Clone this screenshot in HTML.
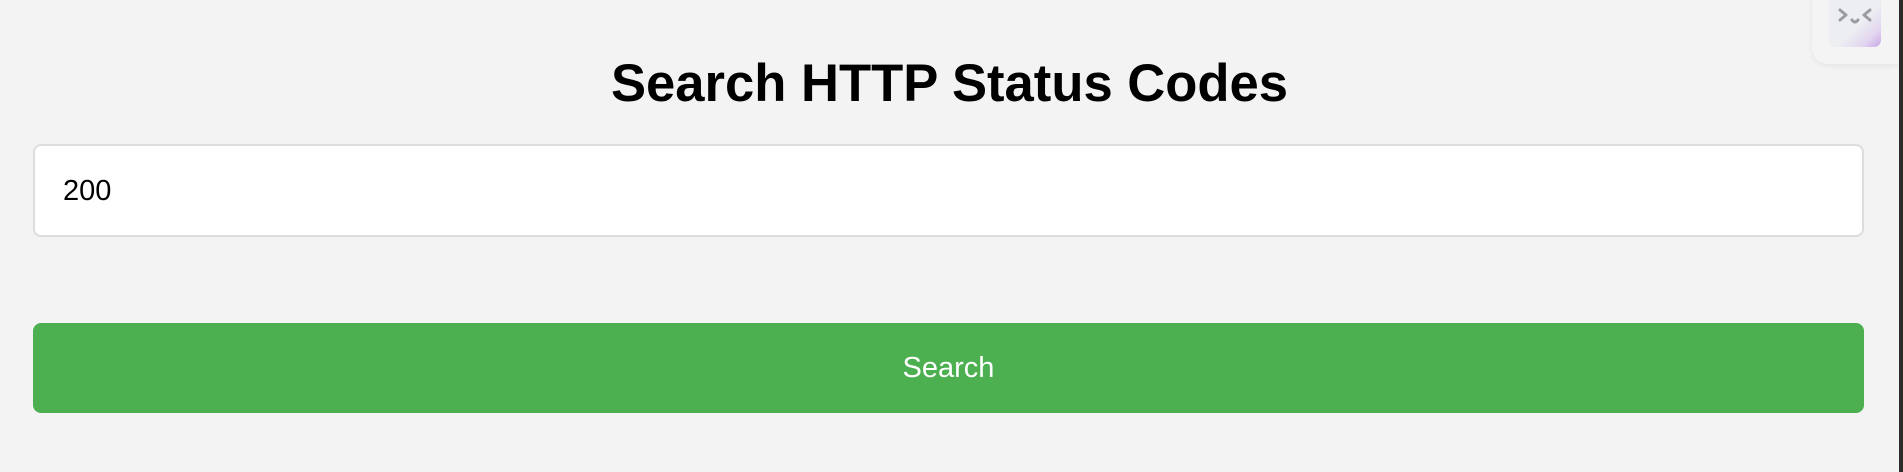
<!DOCTYPE html>
<html><head><style>
html,body{margin:0;padding:0;}
body{width:1903px;height:472px;background:#f3f3f3;position:relative;overflow:hidden;font-family:"Liberation Sans",Arial,sans-serif;}
h1{position:absolute;left:0;width:1899px;top:53px;margin:0;text-align:center;font-size:52.6px;font-weight:bold;line-height:62px;}
.inp{position:absolute;left:33px;top:144px;width:1827px;height:89px;background:#fff;border:2px solid #ddd;border-radius:8px;}
.inp span{position:absolute;left:28px;top:28px;font-size:29px;line-height:34px;color:#000;}
.btn{position:absolute;left:33px;top:323px;width:1831px;height:90px;background:#4caf50;border-radius:8px;color:#fff;font-size:29px;text-align:center;line-height:90px;}
.sb{position:absolute;left:1899px;top:0;width:4px;height:472px;background:#2b2b2b;}
.panel{position:absolute;left:1812px;top:-10px;width:87px;height:74px;background:#f4f4f4;border-radius:0 0 0 16px;box-shadow:0 2px 6px rgba(0,0,0,0.06);}
.ic{position:absolute;left:1829px;top:0;width:52px;height:47px;border-radius:0 0 7px 7px;background:linear-gradient(135deg,#eceef2 0%,#eceef2 55%,#e3d6f0 80%,#c8a6e8 100%);}
</style></head><body>
<h1>Search HTTP Status Codes</h1>
<div class="inp"><span>200</span></div>
<div class="btn">Search</div>
<div class="panel"></div>
<div class="ic"><svg width="52" height="47" viewBox="0 0 52 47"><g fill="none" stroke="#9a9ca2" stroke-width="3" stroke-linecap="round" stroke-linejoin="round"><path d="M11 10 L17 15 L11 20"/><path d="M41 10 L35 15 L41 20"/><path d="M23 20 Q26 24 29 20"/></g></svg></div>
<div class="sb"></div>
</body></html>
